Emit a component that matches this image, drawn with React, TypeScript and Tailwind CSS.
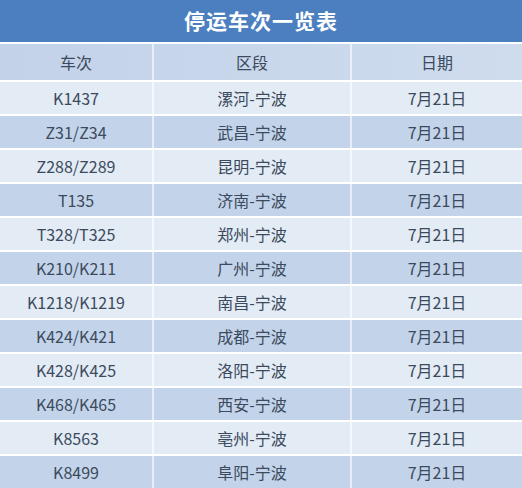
import React from "react";

const rows: [string, string][] = [
  ["K1437", "漯河-宁波"],
  ["Z31/Z34", "武昌-宁波"],
  ["Z288/Z289", "昆明-宁波"],
  ["T135", "济南-宁波"],
  ["T328/T325", "郑州-宁波"],
  ["K210/K211", "广州-宁波"],
  ["K1218/K1219", "南昌-宁波"],
  ["K424/K421", "成都-宁波"],
  ["K428/K425", "洛阳-宁波"],
  ["K468/K465", "西安-宁波"],
  ["K8563", "亳州-宁波"],
  ["K8499", "阜阳-宁波"],
];

export default function App() {
  return (
    <div
      className="w-[522px] h-[488px] overflow-hidden bg-white text-[#3b4a5c]"
      style={{ fontFamily: '"Noto Sans CJK SC", "Noto Sans", sans-serif' }}
    >
      <div className="h-[42px] bg-[#4c7fbf] flex items-center justify-center text-white text-[21px] font-bold tracking-[1px]">
        停运车次一览表
      </div>
      <div className="mt-[2px] h-[36px] grid grid-cols-[154px_198px_170px] bg-gradient-to-r from-[#c3d2e9] to-[#cfdcee] text-[16px]">
        <div className="flex items-center justify-center border-r-2 border-white/60">车次</div>
        <div className="flex items-center justify-center border-r-2 border-white/60">区段</div>
        <div className="flex items-center justify-center">日期</div>
      </div>
      {rows.map(([a, b], i) => (
        <div
          key={a}
          className={`mt-[2px] h-[32px] grid grid-cols-[154px_198px_170px] text-[16px] ${
            i % 2 === 0 ? "bg-[#e3ebf5]" : "bg-[#c3d4ea]"
          }`}
        >
          <div className="flex items-center justify-center border-r-2 border-white/60">{a}</div>
          <div className="flex items-center justify-center border-r-2 border-white/60">{b}</div>
          <div className="flex items-center justify-center">7月21日</div>
        </div>
      ))}
    </div>
  );
}
